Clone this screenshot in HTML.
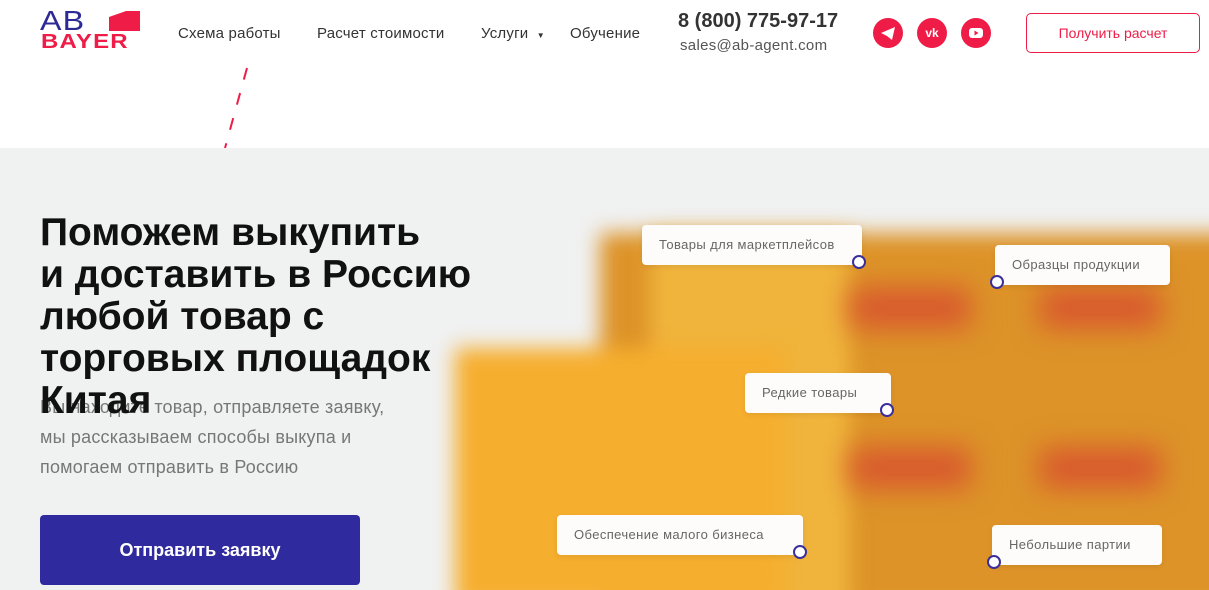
<!DOCTYPE html>
<html><head><meta charset="utf-8"><style>
*{margin:0;padding:0;box-sizing:border-box}
body{width:1209px;height:590px;overflow:hidden;background:#fff;font-family:"Liberation Sans",sans-serif;position:relative}
.hdr{position:absolute;top:0;left:0;width:1209px;height:148px;background:#fff}
.nav{position:absolute;top:25px;font-size:15px;color:#333;letter-spacing:0.2px}
.gray{position:absolute;top:148px;left:0;width:1209px;height:442px;background:#f0f1f1;overflow:hidden}
.blob{position:absolute;filter:blur(10px)}
.tag{position:absolute;background:#fdfcfa;border-radius:4px;font-size:13px;letter-spacing:0.4px;color:#666;padding:0 17px;height:40px;line-height:40px;box-shadow:0 2px 6px rgba(0,0,0,.08)}
.dot{position:absolute;width:14px;height:14px;border:2px solid #3a2f9a;background:#fff;border-radius:50%}
.ic{position:absolute;top:18px;width:30px;height:30px;border-radius:50%;background:#ee1c46}
</style></head><body>
<div class="hdr">
<div style="position:absolute;left:40px;top:8px;font-size:28px;color:#2e2a95;letter-spacing:1px;line-height:26px;transform:scaleX(1.15);transform-origin:left">AB</div>
<div style="position:absolute;left:109px;top:11px;width:31px;height:20px;background:#ee1c46;clip-path:polygon(0 30%,55% 0,100% 0,100% 100%,0 100%)"></div>
<div style="position:absolute;left:41px;top:33px;font-size:20px;font-weight:bold;color:#ee1c46;line-height:18px;letter-spacing:1px;transform:scaleX(1.2);transform-origin:left">BAYER</div>
<div class="nav" style="left:178px">Схема работы</div>
<div class="nav" style="left:317px">Расчет стоимости</div>
<div class="nav" style="left:481px">Услуги <span style="font-size:8px;margin-left:4px">▼</span></div>
<div class="nav" style="left:570px">Обучение</div>
<div style="position:absolute;left:678px;top:10px;font-size:20px;font-weight:bold;color:#333">8 (800) 775-97-17</div>
<div style="position:absolute;left:680px;top:37px;font-size:15px;color:#555;letter-spacing:0.3px">sales@ab-agent.com</div>
<div class="ic" style="left:873px"><svg width="30" height="30" viewBox="0 0 30 30"><path d="M8 15 L22 9 L19 22 L14 18 Z M14 18 L13 21" fill="#fff"/></svg></div>
<div class="ic" style="left:917px;color:#fff;font-weight:bold;font-size:12px;text-align:center;line-height:30px">vk</div>
<div class="ic" style="left:961px"><svg width="30" height="30" viewBox="0 0 30 30"><rect x="8" y="10" width="14" height="10" rx="3" fill="#fff"/><path d="M13.5 12.5 L17.5 15 L13.5 17.5Z" fill="#ee1c46"/></svg></div>
<div style="position:absolute;left:1026px;top:13px;width:174px;height:40px;border:1px solid #ee1c46;border-radius:5px;color:#ee1c46;font-size:14px;text-align:center;line-height:38px">Получить расчет</div>
<svg style="position:absolute;left:220px;top:66px" width="30" height="84"><line x1="27" y1="2" x2="5" y2="82" stroke="#ee1c46" stroke-width="2" stroke-dasharray="12,14"/></svg>
</div>
<div class="gray">
<div class="blob" style="left:600px;top:85px;width:640px;height:380px;background:#dd9328"></div>
<div class="blob" style="left:650px;top:85px;width:200px;height:380px;background:#f0b43c"></div>
<div class="blob" style="left:455px;top:200px;width:330px;height:260px;background:#f6ae2e"></div>
<div class="blob" style="left:850px;top:140px;width:120px;height:40px;background:#d8582e;filter:blur(14px)"></div>
<div class="blob" style="left:1040px;top:140px;width:120px;height:40px;background:#d8582e;filter:blur(14px)"></div>
<div class="blob" style="left:850px;top:300px;width:120px;height:40px;background:#d8582e;filter:blur(14px)"></div>
<div class="blob" style="left:1040px;top:300px;width:120px;height:40px;background:#d8582e;filter:blur(14px)"></div>
<div class="tag" style="left:642px;top:77px;width:220px">Товары для маркетплейсов</div><div class="dot" style="left:852px;top:107px"></div>
<div class="tag" style="left:995px;top:97px;width:175px">Образцы продукции</div><div class="dot" style="left:990px;top:127px"></div>
<div class="tag" style="left:745px;top:225px;width:146px">Редкие товары</div><div class="dot" style="left:880px;top:255px"></div>
<div class="tag" style="left:557px;top:367px;width:246px">Обеспечение малого бизнеса</div><div class="dot" style="left:793px;top:397px"></div>
<div class="tag" style="left:992px;top:377px;width:170px">Небольшие партии</div><div class="dot" style="left:987px;top:407px"></div>
<div style="position:absolute;left:40px;top:244px;font-size:18px;color:#777;line-height:30px;letter-spacing:0.2px">Вы находите товар, отправляете заявку,<br>мы рассказываем способы выкупа и<br>помогаем отправить в Россию</div>
<div style="position:absolute;left:40px;top:64px;font-size:39px;font-weight:bold;color:#111;line-height:42px">Поможем выкупить<br>и доставить в Россию<br>любой товар с<br>торговых площадок<br>Китая</div>
<div style="position:absolute;left:40px;top:367px;width:320px;height:70px;background:#2f2a9e;border-radius:4px;color:#fff;font-size:18px;font-weight:bold;text-align:center;line-height:70px">Отправить заявку</div>
</div>
</body></html>
